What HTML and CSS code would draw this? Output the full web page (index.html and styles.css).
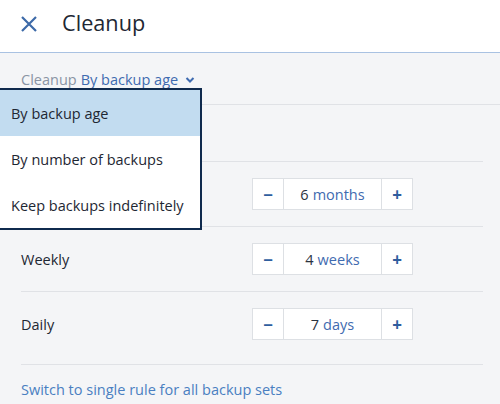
FILE: index.html
```html
<!DOCTYPE html>
<html>
<head>
<meta charset="utf-8">
<link rel="stylesheet" href="styles.css">
</head>
<body>
<div class="page">
  <header class="header">
    <svg class="close" width="18" height="18" viewBox="0 0 18 18"><path d="M2 2 L16 16 M16 2 L2 16" stroke="#3d6aa8" stroke-width="2.2" fill="none"/></svg>
    <h1 class="title">Cleanup</h1>
  </header>
  <div class="crumb">
    <span class="crumb-label">Cleanup</span>
    <span class="crumb-value">By backup age</span>
    <svg class="chev" width="10" height="8" viewBox="0 0 10 8"><path d="M1.5 2 L5 5.5 L8.5 2" stroke="#3f6bb0" stroke-width="2" fill="none"/></svg>
  </div>
  <div class="content">
    <div class="row row-top"></div>
    <div class="row">
      <span class="label">Monthly</span>
      <div class="stepper"><button class="step">&minus;</button><div class="val"><span class="num">6</span> <span class="unit">months</span></div><button class="step">+</button></div>
    </div>
    <div class="row">
      <span class="label">Weekly</span>
      <div class="stepper"><button class="step">&minus;</button><div class="val"><span class="num">4</span> <span class="unit">weeks</span></div><button class="step">+</button></div>
    </div>
    <div class="row row-last">
      <span class="label">Daily</span>
      <div class="stepper"><button class="step">&minus;</button><div class="val"><span class="num">7</span> <span class="unit">days</span></div><button class="step">+</button></div>
    </div>
    <a class="link">Switch to single rule for all backup sets</a>
  </div>
  <ul class="menu">
    <li class="item active">By backup age</li>
    <li class="item">By number of backups</li>
    <li class="item">Keep backups indefinitely</li>
  </ul>
</div>
</body>
</html>
```
FILE: styles.css
```css
* { box-sizing: border-box; }
html, body { margin: 0; padding: 0; }
body {
  width: 500px;
  height: 404px;
  overflow: hidden;
  background: #f4f5f7;
  font-family: "Open Sans", "Noto Sans", sans-serif;
  font-size: 14.5px;
  color: #1e2733;
}
.page { position: relative; height: 404px; }
.header {
  height: 53px;
  background: #fff;
  border-bottom: 1px solid #a9c2e2;
  display: flex;
  align-items: center;
  padding-left: 20px;
}
.close { margin-top: -4px; }
.title {
  margin: 0 0 0 24px;
  font-weight: 400;
  font-size: 21.7px;
  margin-top: -8px;
  color: #1e2733;
}
.crumb {
  height: 52px;
  border-bottom: 1px solid #e0e2e6;
  display: flex;
  align-items: center;
  padding-left: 21px;
  padding-top: 2px;
  gap: 4px;
}
.crumb-label { color: #8a94a4; }
.crumb-value { color: #3f6bb0; }
.chev { margin-left: 3px; margin-top: 1px; }
.content { padding: 0 17px 0 21px; }
.row {
  display: flex;
  align-items: center;
  justify-content: space-between;
  height: 65px;
  border-bottom: 1px solid #e0e2e6;
  padding-right: 70px;
}
.row-top { height: 57px; }
.row-last { height: 73px; padding-bottom: 8px; }
.label { color: #1e2733; }
.stepper {
  display: flex;
  height: 32px;
  border: 1px solid #dde0e4;
  background: #fff;
}
.step {
  width: 30px;
  border: none;
  background: #fff;
  padding: 0;
  font-family: inherit;
  font-size: 17px;
  font-weight: 700;
  color: #2f5e9e;
  display: flex;
  align-items: center;
  justify-content: center;
}
.val {
  width: 99px;
  border-left: 1px solid #dde0e4;
  border-right: 1px solid #dde0e4;
  display: flex;
  align-items: center;
  justify-content: center;
  gap: 4px;
}
.num { color: #2a3340; }
.unit { color: #3f6bb0; }
.link {
  display: block;
  margin-top: 15px;
  color: #4a7fc1;
}
.menu {
  position: absolute;
  left: 0;
  top: 88px;
  width: 202px;
  margin: 0;
  padding: 0;
  list-style: none;
  background: #fff;
  border: 2px solid #0f2a4d;
  border-left: none;
}
.item {
  height: 46px;
  display: flex;
  align-items: center;
  padding-left: 11px;
  color: #1e2733;
}
.item.active { background: #c2dcf0; }
```
